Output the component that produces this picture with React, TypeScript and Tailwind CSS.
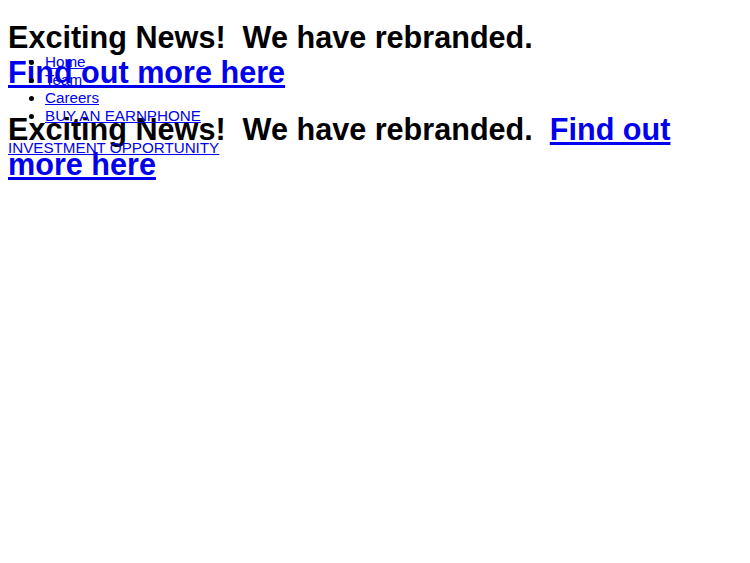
export default function App() {
  const navLinks = ['Home', 'Team', 'Careers', 'BUY AN EARNPHONE'];

  return (
    <div className="relative min-h-screen bg-white px-2 pt-[20px] font-['Liberation_Sans',Arial,sans-serif] text-[15.2px] text-black">
      {/* banner */}
      <h1 className="m-0 w-[560px] text-[30.6px] font-bold leading-[35px]">
        Exciting News!{'\u00a0'} We have rebranded.{'\u00a0'}{' '}
        <a href="#" className="text-[#0000ee] underline">Find out more here</a>
      </h1>

      <h1 className="mb-0 mt-[22px] text-[30.6px] font-bold leading-[35px]">
        Exciting News!{'\u00a0'} We have rebranded.{'\u00a0'}{' '}
        <a href="#" className="text-[#0000ee] underline">Find out more here</a>
      </h1>

      {/* nav sits over the headings */}
      <ul className="absolute left-2 top-[53px] m-0 list-disc pl-[37px] leading-[18px]">
        {navLinks.map((label) => (
          <li key={label}>
            <a href="#" className="text-[#0000ee] underline">{label}</a>
          </li>
        ))}
      </ul>

      <a href="#" className="absolute left-2 top-[139px] leading-[17px] text-[#0000ee] underline">
        INVESTMENT OPPORTUNITY
      </a>
    </div>
  );
}
